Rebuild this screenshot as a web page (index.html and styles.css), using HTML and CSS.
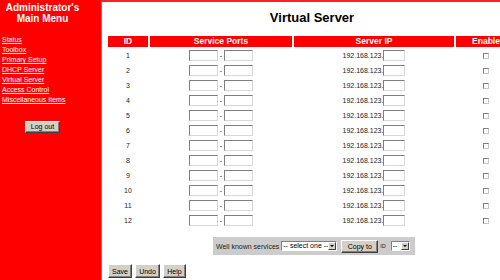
FILE: index.html
```html
<!DOCTYPE html>
<html lang="en">
<head>
    <meta charset="UTF-8">
    <title>Virtual Server</title>
    <link rel="stylesheet" href="styles.css">
</head>
<body>
<div class="frame">
    <div class="menu">
        <div class="menu-title">Administrator's<br>Main Menu</div>
        <div class="menu-links">
            <a href="#">Status</a>
            <a href="#">Toolbox</a>
            <a href="#">Primary Setup</a>
            <a href="#">DHCP Server</a>
            <a href="#">Virtual Server</a>
            <a href="#">Access Control</a>
            <a href="#">Miscellaneous Items</a>
        </div>
        <div class="logout"><button class="btn btn-logout">Log out</button></div>
    </div>

    <div class="main">
        <div class="content">
            <h1>Virtual Server</h1>

            <div class="vs-grid">
                <div class="head">ID</div>
                <div class="head">Service Ports</div>
                <div class="head">Server IP</div>
                <div class="head">Enable</div>

                <div class="cell">1</div>
                <div class="cell"><input class="txt port" type="text"><span class="dash">-</span><input class="txt port" type="text"></div>
                <div class="cell">192.168.123.<input class="txt ip" type="text"></div>
                <div class="cell"><input class="chk" type="checkbox"></div>

                <div class="cell">2</div>
                <div class="cell"><input class="txt port" type="text"><span class="dash">-</span><input class="txt port" type="text"></div>
                <div class="cell">192.168.123.<input class="txt ip" type="text"></div>
                <div class="cell"><input class="chk" type="checkbox"></div>

                <div class="cell">3</div>
                <div class="cell"><input class="txt port" type="text"><span class="dash">-</span><input class="txt port" type="text"></div>
                <div class="cell">192.168.123.<input class="txt ip" type="text"></div>
                <div class="cell"><input class="chk" type="checkbox"></div>

                <div class="cell">4</div>
                <div class="cell"><input class="txt port" type="text"><span class="dash">-</span><input class="txt port" type="text"></div>
                <div class="cell">192.168.123.<input class="txt ip" type="text"></div>
                <div class="cell"><input class="chk" type="checkbox"></div>

                <div class="cell">5</div>
                <div class="cell"><input class="txt port" type="text"><span class="dash">-</span><input class="txt port" type="text"></div>
                <div class="cell">192.168.123.<input class="txt ip" type="text"></div>
                <div class="cell"><input class="chk" type="checkbox"></div>

                <div class="cell">6</div>
                <div class="cell"><input class="txt port" type="text"><span class="dash">-</span><input class="txt port" type="text"></div>
                <div class="cell">192.168.123.<input class="txt ip" type="text"></div>
                <div class="cell"><input class="chk" type="checkbox"></div>

                <div class="cell">7</div>
                <div class="cell"><input class="txt port" type="text"><span class="dash">-</span><input class="txt port" type="text"></div>
                <div class="cell">192.168.123.<input class="txt ip" type="text"></div>
                <div class="cell"><input class="chk" type="checkbox"></div>

                <div class="cell">8</div>
                <div class="cell"><input class="txt port" type="text"><span class="dash">-</span><input class="txt port" type="text"></div>
                <div class="cell">192.168.123.<input class="txt ip" type="text"></div>
                <div class="cell"><input class="chk" type="checkbox"></div>

                <div class="cell">9</div>
                <div class="cell"><input class="txt port" type="text"><span class="dash">-</span><input class="txt port" type="text"></div>
                <div class="cell">192.168.123.<input class="txt ip" type="text"></div>
                <div class="cell"><input class="chk" type="checkbox"></div>

                <div class="cell">10</div>
                <div class="cell"><input class="txt port" type="text"><span class="dash">-</span><input class="txt port" type="text"></div>
                <div class="cell">192.168.123.<input class="txt ip" type="text"></div>
                <div class="cell"><input class="chk" type="checkbox"></div>

                <div class="cell">11</div>
                <div class="cell"><input class="txt port" type="text"><span class="dash">-</span><input class="txt port" type="text"></div>
                <div class="cell">192.168.123.<input class="txt ip" type="text"></div>
                <div class="cell"><input class="chk" type="checkbox"></div>

                <div class="cell">12</div>
                <div class="cell"><input class="txt port" type="text"><span class="dash">-</span><input class="txt port" type="text"></div>
                <div class="cell">192.168.123.<input class="txt ip" type="text"></div>
                <div class="cell"><input class="chk" type="checkbox"></div>
            </div>

            <div class="services">
                <span>Well known services</span>
                <div class="combo combo-service">
                    <select><option>-- select one --</option></select>
                    <span class="arrow"></span>
                </div>
                <button class="btn btn-copy">Copy to</button>
                <span class="id-label">ID</span>
                <div class="combo combo-id">
                    <select><option>--</option></select>
                    <span class="arrow"></span>
                </div>
            </div>

            <div class="actions">
                <button class="btn btn-save">Save</button>
                <button class="btn btn-undo">Undo</button>
                <button class="btn btn-help">Help</button>
            </div>
        </div>
    </div>
</div>
</body>
</html>
```

FILE: styles.css
```css
body {
    margin: 0;
    overflow: hidden;
    font-family: "Liberation Sans", Arial, sans-serif;
    background-color: #fff;
}
.frame {
    display: flex;
    height: 280px;
}

/* left menu */
.menu {
    width: 101px;
    flex: none;
    background-color: #ff0000;
    color: #fff;
}
.menu-title {
    width: 85px;
    padding-top: 2px;
    font-size: 10px;
    line-height: 11px;
    font-weight: bold;
    text-align: center;
}
.menu-links {
    margin-top: 11px;
    padding-left: 2px;
    font-size: 7px;
    line-height: 10px;
}
.menu-links a {
    display: block;
    color: #fff;
}
.logout {
    width: 85px;
    margin-top: 10px;
    text-align: center;
}

/* buttons */
.btn {
    box-sizing: border-box;
    font-family: "Liberation Sans", Arial, sans-serif;
    font-size: 7px;
    color: #000;
    background-color: #d4d0c8;
    border: 1px solid;
    border-color: #fff #404040 #404040 #fff;
    box-shadow: inset -1px -1px #808080;
    padding: 0;
    margin: 0;
}
.btn-logout {
    width: 35px;
    height: 12px;
}

/* main area */
.main {
    flex: none;
    border-left: 1px solid #ff4a4a;
    border-top: 2px solid #ff2020;
    padding-left: 6px;
}
.content {
    width: 408px;
}
h1 {
    margin: 8px 0 0;
    font-size: 13px;
    line-height: 15px;
    text-align: center;
}
.vs-grid {
    display: grid;
    grid-template-columns: 40px 142px 160px 60px;
    grid-template-rows: 11px;
    grid-auto-rows: 13px;
    gap: 2px;
    margin-top: 11px;
    font-size: 7px;
    color: #222;
}
.head {
    background-color: #ff0000;
    color: #fff;
    font-weight: bold;
    font-size: 8.5px;
    line-height: 11px;
    text-align: center;
    white-space: nowrap;
}
.cell {
    display: flex;
    align-items: center;
    justify-content: center;
    white-space: nowrap;
}
.txt {
    box-sizing: border-box;
    height: 11px;
    border: 1px solid;
    border-color: #7f7f7f #d8d8d8 #d8d8d8 #7f7f7f;
    background-color: #fff;
    padding: 0;
    margin: 0;
}
.port {
    width: 29px;
}
.ip {
    width: 22px;
}
.dash {
    margin: 0 2px;
}
.chk {
    appearance: none;
    box-sizing: border-box;
    width: 6px;
    height: 6px;
    margin: 0;
    border: 1px solid;
    border-color: #7f7f7f #c8c8c8 #c8c8c8 #7f7f7f;
    background-color: #fff;
}

/* well known services bar */
.services {
    box-sizing: border-box;
    width: 202px;
    height: 18px;
    margin: 10px 0 0 105px;
    padding-left: 3px;
    display: flex;
    align-items: center;
    background-color: #cccccc;
    font-size: 7px;
    color: #222;
    white-space: nowrap;
}
.combo {
    box-sizing: border-box;
    display: flex;
    align-items: center;
    height: 10px;
    border: 1px solid;
    border-color: #808080 #fff #fff #808080;
    background-color: #fff;
}
.combo select {
    appearance: none;
    flex: 1;
    min-width: 0;
    height: 8px;
    border: 0;
    padding: 0 0 0 1px;
    margin: 0;
    background: transparent;
    font-family: "Liberation Sans", Arial, sans-serif;
    font-size: 7px;
    line-height: 8px;
    color: #000;
}
.combo .arrow {
    box-sizing: border-box;
    width: 8px;
    height: 8px;
    flex: none;
    background-color: #d4d0c8;
    border: 1px solid;
    border-color: #fff #404040 #404040 #fff;
    display: flex;
    align-items: center;
    justify-content: center;
}
.combo .arrow::after {
    content: "";
    border-left: 2px solid transparent;
    border-right: 2px solid transparent;
    border-top: 2px solid #000;
}
.combo-service {
    width: 56px;
    margin-left: 2px;
}
.btn-copy {
    width: 37px;
    height: 13px;
    margin-left: 4px;
}
.id-label {
    font-size: 5.5px;
    align-self: flex-end;
    margin: 0 0 6px 2px;
}
.combo-id {
    width: 19px;
    margin-left: 5px;
}

/* bottom buttons */
.actions {
    display: flex;
    gap: 3px;
    margin-top: 9px;
}
.actions .btn {
    height: 14px;
}
.btn-save {
    width: 24px;
}
.btn-undo {
    width: 25px;
}
.btn-help {
    width: 23px;
}
```
